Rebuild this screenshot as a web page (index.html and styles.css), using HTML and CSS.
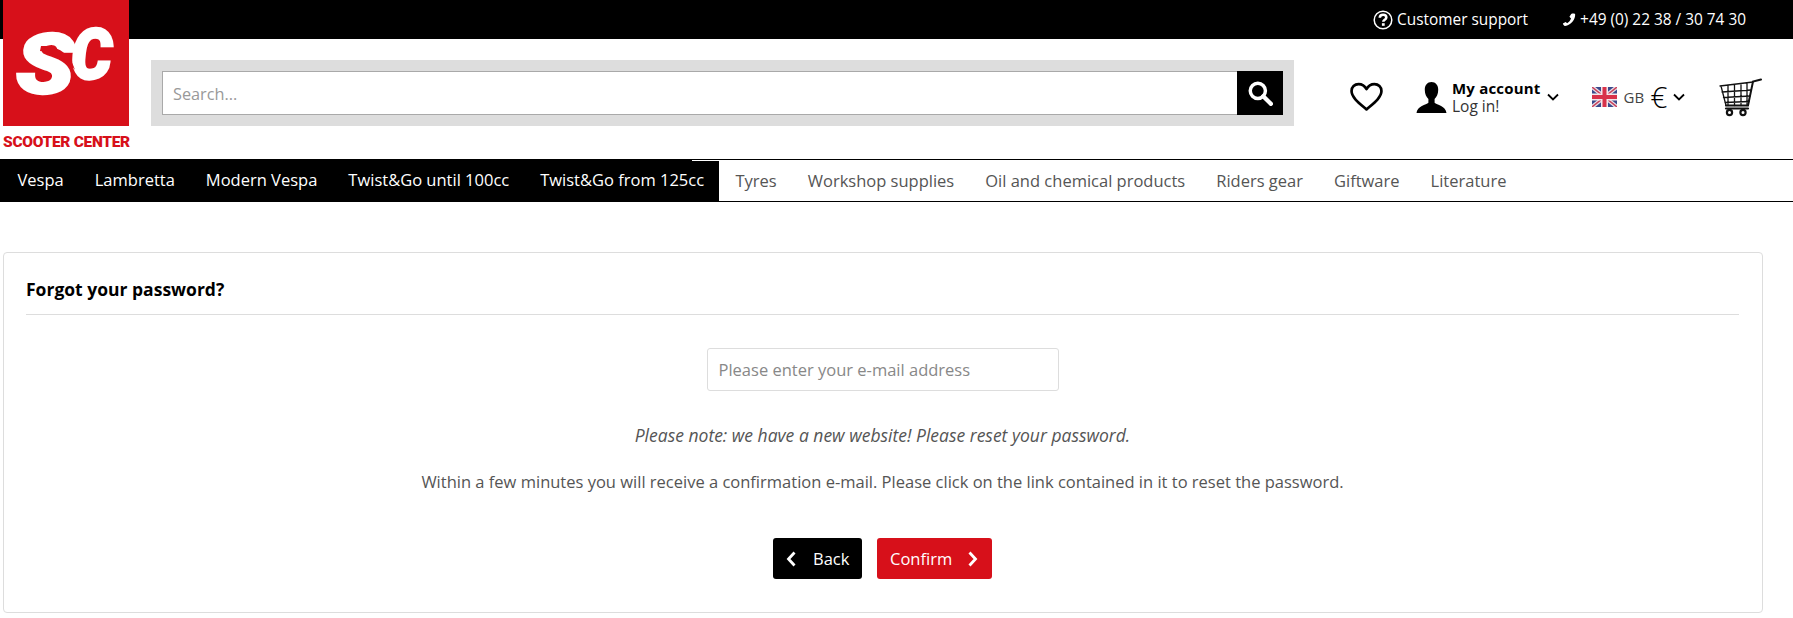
FILE: index.html
```html
<!DOCTYPE html>
<html lang="en">
<head>
<meta charset="utf-8">
<title>Forgot your password?</title>
<link rel="stylesheet" href="styles.css">
</head>
<body>
<div class="topbar">
  <a class="top-link"><svg class="ico-help" viewBox="0 0 20 20"><circle cx="10" cy="10" r="8.800" fill="none" stroke="#fff" stroke-width="1.500"/><path d="M6.800 7.800c0-1.900 1.400-3.100 3.300-3.100s3.200 1.100 3.200 2.700c0 2.400-3 2.400-3 4.400" fill="none" stroke="#fff" stroke-width="2.600"/><rect x="8.900" y="13.200" width="2.800" height="2.600" fill="#fff"/></svg>Customer support</a>
  <a class="top-link phone"><svg class="ico-phone" viewBox="0 0 16 16"><path d="M15 1.200c.6 6-4.800 13-11.500 13.600-1 .1-2.500-1.800-2.500-2.800l3.200-1.700 1.700 1.400c2-1 3.800-3.300 4.400-5.300L8.500 4.200l2-3.200c1.200-.6 4-.8 4.500.2z" fill="#fff"/></svg>+49 (0) 22 38 / 30 74 30</a>
</div>
<a class="logo">
  <svg class="logo-mark" viewBox="0 0 126 126">
    <rect width="126" height="126" fill="#d7101a"/>
    <text class="logo-c" transform="translate(68 79) scale(.92 1)">C</text>
    <text class="logo-s" transform="translate(13 93) scale(1.140 1)">S</text>
    <path d="M38 46c14-1 29 6 34 24-7-11-20-17-35-19z" fill="#d7101a"/>
  </svg>
  <span class="logo-name">SCOOTER CENTER</span>
</a>
<header class="header">
  <form class="search">
    <input class="search-input" type="text" placeholder="Search...">
    <button class="search-btn" type="button" aria-label="Search"><svg viewBox="0 0 24 24" width="26" height="26"><circle cx="10" cy="10" r="7" fill="none" stroke="#fff" stroke-width="3.200"/><path d="M15 15l7 7" stroke="#fff" stroke-width="4" stroke-linecap="round"/></svg></button>
  </form>
  <div class="tools">
    <svg class="heart" viewBox="0 0 32 29"><path d="M16 26.500C9 20.500 1.500 15 1.500 8.800 1.500 4.800 4.500 2 8.300 2c3.200 0 6 1.700 7.700 4.800C17.700 3.700 20.500 2 23.700 2c3.800 0 6.800 2.800 6.800 6.800 0 6.200-7.500 11.700-14.500 17.700z" fill="none" stroke="#000" stroke-width="2.600" stroke-linejoin="round"/></svg>
    <div class="account">
      <svg class="person" viewBox="0 0 29 30"><path d="M14.500 0c4 0 6.500 3 6.500 7.500 0 4-1.500 7-3.500 9v3.500c2 2 11 3 11.500 10H0c.5-7 9.500-8 11.500-10v-3.500C9.500 14.500 8 11.500 8 7.500 8 3 10.500 0 14.500 0z" fill="#000"/></svg>
      <div class="account-text"><strong>My account</strong><span>Log in!</span></div>
      <svg class="chev" viewBox="0 0 12 8"><path d="M1 1.500l5 5 5-5" fill="none" stroke="#000" stroke-width="1.800"/></svg>
    </div>
    <div class="locale">
      <svg class="flag" viewBox="0 0 25 20"><rect width="25" height="20" fill="#3a4a8c"/><path d="M0 0l25 20M25 0L0 20" stroke="#e8dfe6" stroke-width="4"/><path d="M0 0l25 20M25 0L0 20" stroke="#c9405a" stroke-width="1.400"/><path d="M12.500 0v20M0 10h25" stroke="#f3e6ea" stroke-width="7"/><path d="M12.500 0v20M0 10h25" stroke="#d8324a" stroke-width="4"/></svg>
      <span class="gb">GB</span>
      <span class="euro">€</span>
      <svg class="chev" viewBox="0 0 12 8"><path d="M1 1.500l5 5 5-5" fill="none" stroke="#000" stroke-width="1.800"/></svg>
    </div>
    <svg class="cart" viewBox="0 0 43 38"><g fill="none" stroke="#111" stroke-linecap="round"><path d="M42 1L34 3l-5 24H7" stroke-width="2"/><path d="M1 7.500l33-4M2 7.500l5 19.500M9 7v20M15.500 6v21M22 5v22M28 4.500V27M3 13.500l29-2M4.500 19l26.500-1.500M6 24l24-1" stroke-width="1.300"/><path d="M7 30h22" stroke-width="2.200"/><circle cx="10.500" cy="34" r="2.600" stroke-width="2.200"/><circle cx="24" cy="34" r="2.600" stroke-width="2.200"/></g></svg>
  </div>
</header>
<nav class="nav">
  <ul class="nav-dark">
    <li>Vespa</li><li>Lambretta</li><li>Modern Vespa</li><li>Twist&amp;Go until 100cc</li><li>Twist&amp;Go from 125cc</li>
  </ul>
  <ul class="nav-light">
    <li>Tyres</li><li>Workshop supplies</li><li>Oil and chemical products</li><li>Riders gear</li><li>Giftware</li><li>Literature</li>
  </ul>
</nav>
<main class="card">
  <h1 class="card-title">Forgot your password?</h1>
  <div class="card-body">
    <input class="email" type="text" placeholder="Please enter your e-mail address">
    <p class="note">Please note: we have a new website! Please reset your password.</p>
    <p class="info">Within a few minutes you will receive a confirmation e-mail. Please click on the link contained in it to reset the password.</p>
    <div class="actions">
      <button class="btn btn-back" type="button"><svg viewBox="0 0 10 16" class="btn-ico"><path d="M8.500 1.500L2.500 8l6 6.500" fill="none" stroke="#fff" stroke-width="2.800"/></svg>Back</button>
      <button class="btn btn-confirm" type="button">Confirm<svg viewBox="0 0 10 16" class="btn-ico"><path d="M1.500 1.500l6 6.500-6 6.500" fill="none" stroke="#fff" stroke-width="2.800"/></svg></button>
    </div>
  </div>
</main>
</body>
</html>
```
FILE: styles.css
```css
* { box-sizing: border-box; }
html, body { margin: 0; padding: 0; }
body {
  background: #fff;
  color: #555;
  font-family: "Open Sans", "DejaVu Sans", sans-serif;
  font-size: 16.500px;
  overflow: hidden;
  height: 618px;
  position: relative;
}
.topbar {
  height: 39px;
  background: #000;
  color: #fff;
  display: flex;
  justify-content: flex-end;
  align-items: center;
  gap: 34px;
  padding-right: 47px;
  font-size: 15.400px;
}
.top-link { display: flex; align-items: center; }
.ico-help { width: 20px; height: 20px; margin-right: 4px; }
.ico-phone { width: 14px; height: 14px; margin-right: 4px; }
.logo {
  position: absolute;
  left: 3px;
  top: 0;
  width: 126px;
  display: block;
}
.logo-mark { display: block; width: 126px; height: 126px; }
.logo-s, .logo-c {
  font-family: Roboto, sans-serif;
  font-weight: 900;
  font-style: italic;
  fill: #fff;
  stroke: #fff;
  stroke-width: 2.500px;
}
.logo-s { font-size: 84px; }
.logo-c { font-size: 70px; }
.logo-name {
  display: block;
  font-family: Roboto, sans-serif;
  font-weight: 900;
  font-size: 15.500px;
  line-height: 14px;
  margin-top: 9px;
  color: #d7101a;
  white-space: nowrap;
  letter-spacing: -0.3px;
}
.header {
  height: 120px;
  padding: 21px 0 0 151px;
  display: flex;
  align-items: flex-start;
}
.search {
  width: 1143px;
  height: 66px;
  background: #ddd;
  padding: 11px;
  display: flex;
}
.search-input {
  flex: 1;
  height: 44px;
  border: 1px solid #a9a9a9;
  border-right: 0;
  padding: 1px 10px 0;
  font: 16.300px "Open Sans", sans-serif;
  outline: 0;
  background: #fff;
}
.search-input::placeholder { color: #999; opacity: 1; }
.search-btn {
  width: 46px;
  height: 44px;
  background: #000;
  border: 0;
  padding: 0;
  display: flex;
  align-items: center;
  justify-content: center;
}
.tools {
  flex: 1;
  display: flex;
  align-items: center;
  height: 66px;
  margin-top: 4px;
  padding: 0 31px 0 56px;
}
.heart { width: 33px; height: 30px; }
.account { display: flex; align-items: center; margin-left: 33px; }
.person { width: 31px; height: 31px; }
.account-text {
  display: flex;
  flex-direction: column;
  margin: -1px 0 0 5px;
  font-size: 15.500px;
  line-height: 18px;
  color: #333;
}
.account-text strong { color: #000; font-weight: 700; font-size: 15px; letter-spacing: 0.2px; }
.chev { width: 12px; height: 8px; }
.account .chev { margin-left: 6px; }
.locale { display: flex; align-items: center; margin-left: 33px; }
.flag { width: 25px; height: 20px; }
.gb { font-size: 15px; margin-left: 7px; color: #444; }
.euro { font-size: 30px; line-height: 26px; font-weight: 300; color: #000; margin-left: 6px; }
.locale .chev { margin-left: 6px; }
.cart { width: 43px; height: 39px; margin-left: auto; }
.nav {
  height: 43px;
  display: flex;
  border-top: 1px solid #000;
  border-bottom: 1px solid #000;
  position: relative;
}
.nav::after {
  content: "";
  position: absolute;
  left: 692px;
  top: 0;
  width: 27px;
  height: 1px;
  background: #fff;
}
.nav ul { list-style: none; margin: 0; padding: 0; display: flex; font-size: 16.500px; }
.nav li { padding: 0 15.500px; line-height: 41px; white-space: nowrap; }
.nav-dark { background: #000; color: #fff; width: 719px; margin-top: -1px !important; padding-left: 2px !important; height: 42px; }
.nav-light { color: #555; padding-left: 1px !important; }
.card {
  margin: 50px 0 0 3px;
  width: 1760px;
  height: 361px;
  border: 1px solid #ddd;
  border-radius: 4px;
  padding: 0 23px 0 22px;
}
.card-title {
  margin: 0;
  height: 62px;
  border-bottom: 1px solid #ddd;
  font-size: 17.500px;
  line-height: 20px;
  padding-top: 26px;
  color: #000;
  font-weight: 700;
}
.card-body { display: flex; flex-direction: column; align-items: center; }
.email {
  width: 352px;
  height: 43px;
  margin-top: 33px;
  border: 1px solid #ddd;
  border-radius: 3px;
  padding: 0 11px;
  font: 16.500px "Open Sans", sans-serif;
  outline: 0;
}
.email::placeholder { color: #888; opacity: 1; }
.note { margin: 34px 0 0; font-style: italic; font-size: 17.500px; line-height: 20px; }
.info { margin: 27px 0 0; line-height: 20px; }
.actions { display: flex; gap: 15px; margin-top: 46px; }
.btn {
  height: 41px;
  border: 0;
  border-radius: 3px;
  color: #fff;
  font: 16.500px "Open Sans", sans-serif;
  display: flex;
  align-items: center;
  padding: 0 13px;
}
.btn-ico { width: 10px; height: 16px; flex: none; }
.btn-back { background: #000; width: 89px; }
.btn-back .btn-ico { margin-right: 17px; }
.btn-confirm { background: #d7101a; width: 115px; }
.btn-confirm .btn-ico { margin-left: 16px; }
```
